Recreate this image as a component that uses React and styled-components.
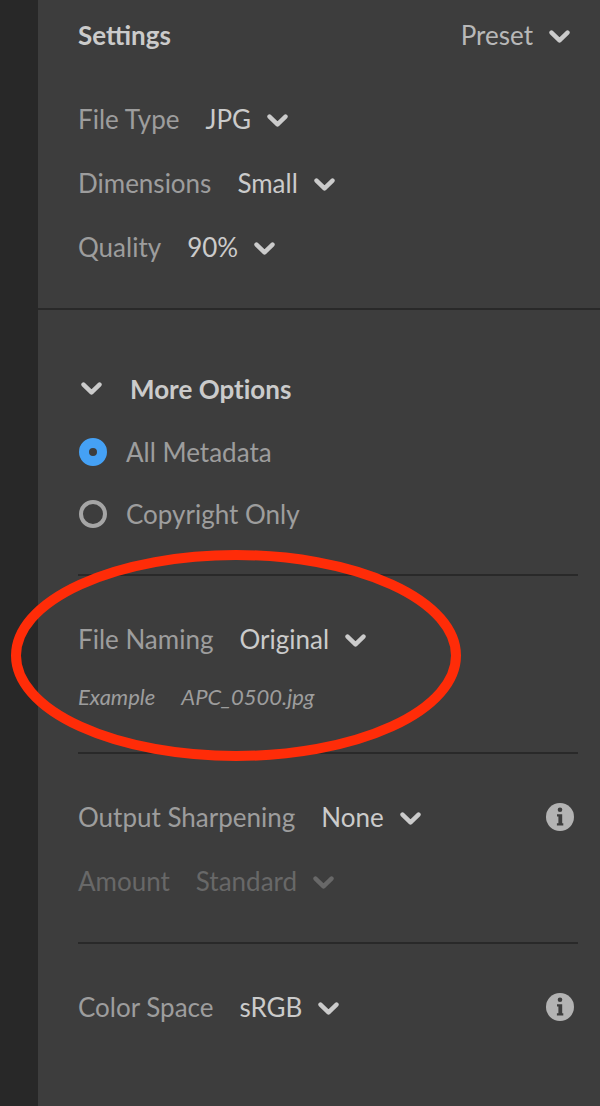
import { useState } from "react";
import styled, { createGlobalStyle } from "styled-components";

const GlobalStyle = createGlobalStyle`
  * {
    box-sizing: border-box;
  }

  body {
    margin: 0;
    background: #282828;
    font-family: Lato, "Open Sans", sans-serif;
    font-size: 26px;
    line-height: 32px;
    color: #cbcbcb;
  }
`;

const Page = styled.div`
  display: flex;
  min-height: 100vh;
  padding-left: 38px;
`;

const Panel = styled.main`
  flex: 1;
  min-width: 0;
  background: #3d3d3d;
`;

const Basics = styled.section`
  padding: 19px 22px 45px 40px;
  border-bottom: 2px solid #292929;
`;

const Header = styled.header`
  display: flex;
  align-items: center;
  justify-content: space-between;
  padding-right: 8px;
  margin-bottom: 52px;
`;

const Title = styled.h2`
  margin: 0;
  font-size: 26px;
  font-weight: 700;
`;

const Rows = styled.div`
  display: flex;
  flex-direction: column;
  gap: ${({ $gap }) => $gap || 32}px;
`;

const Options = styled.div`
  padding: 63px 22px 0 40px;
`;

const Group = styled.section`
  position: relative;
  padding: 47px 0 ${({ $bottom }) => $bottom || 45}px;
  border-top: 2px solid #292929;
`;

const Metadata = styled.fieldset`
  display: flex;
  flex-direction: column;
  gap: 30px;
  margin: 0;
  padding: 31px 0 44px;
  border: 0;
`;

const Row = styled.div`
  display: flex;
  align-items: center;
  padding-right: 4px;
  color: ${({ $disabled }) => ($disabled ? "#686868" : "#cbcbcb")};
`;

const Label = styled.label`
  margin-right: 26px;
  color: ${({ $disabled }) => ($disabled ? "#686868" : "#9d9d9d")};
`;

const SelectBox = styled.div`
  display: grid;
  align-items: center;
`;

const Select = styled.select`
  grid-area: 1 / 1;
  appearance: none;
  field-sizing: content;
  height: 32px;
  margin: 0;
  padding: 0 37px 0 0;
  border: 0;
  background: transparent;
  color: ${({ $muted }) => ($muted ? "#b8b8b8" : "inherit")};
  font: inherit;
  opacity: 1;
`;

const SelectChevron = styled.span`
  grid-area: 1 / 1;
  justify-self: end;
  display: flex;
  padding-top: 3px;
  pointer-events: none;
`;

const Toggle = styled.button`
  display: flex;
  align-items: center;
  gap: 28px;
  padding: 0 0 0 3px;
  border: 0;
  background: none;
  color: inherit;
  font: inherit;
  font-weight: 700;
  font-variant-ligatures: none;
  cursor: pointer;
`;

const RadioLabel = styled.label`
  display: flex;
  align-items: center;
  gap: 19px;
  padding-left: 1px;
  color: #9d9d9d;
`;

const Radio = styled.input`
  appearance: none;
  width: 28px;
  height: 28px;
  margin: 0;
  border: 4px solid #a5a5a5;
  border-radius: 50%;

  &:checked {
    border: 10px solid #45a1f5;
  }
`;

const Example = styled.div`
  display: flex;
  gap: 26px;
  color: #9d9d9d;
  font-size: 22px;
  font-style: italic;
`;

const InfoButton = styled.button`
  display: flex;
  margin-left: auto;
  padding: 0;
  border: 0;
  background: none;
  cursor: pointer;
`;

const Highlight = styled.svg`
  position: absolute;
  z-index: 1;
  top: -26px;
  left: -67px;
  width: 450px;
  height: 211px;
  pointer-events: none;
`;

const Chevron = () => (
  <svg width="21" height="14" viewBox="0 0 21 14" fill="none" aria-hidden="true">
    <path
      d="M2.5 2.6 10.5 10.4 18.5 2.6"
      stroke="currentColor"
      strokeWidth="4.4"
      strokeLinecap="round"
      strokeLinejoin="round"
    />
  </svg>
);

const Info = ({ label }) => (
  <InfoButton type="button" aria-label={label}>
    <svg width="28" height="28" viewBox="0 0 28 28" aria-hidden="true">
      <circle cx="14" cy="14" r="14" fill="#b3b3b3" />
      <circle cx="14" cy="6.8" r="2.3" fill="#3d3d3d" />
      <path d="M11 11.3h5.2v8.9h1.1v2.2h-6.4v-2.2h1.5v-6.7H11z" fill="#3d3d3d" />
    </svg>
  </InfoButton>
);

const Dropdown = ({ id, options, muted, ...rest }) => (
  <SelectBox>
    <Select id={id} $muted={muted} {...rest}>
      {options.map((option) => (
        <option key={option}>{option}</option>
      ))}
    </Select>
    <SelectChevron>
      <Chevron />
    </SelectChevron>
  </SelectBox>
);

const Setting = ({ id, label, options, disabled, info }) => (
  <Row $disabled={disabled}>
    <Label htmlFor={id} $disabled={disabled}>
      {label}
    </Label>
    <Dropdown id={id} options={options} disabled={disabled} />
    {info && <Info label={`About ${label}`} />}
  </Row>
);

export default function App() {
  const [open, setOpen] = useState(true);

  return (
    <Page>
      <GlobalStyle />
      <Panel>
        <Basics>
          <Header>
            <Title>Settings</Title>
            <Dropdown id="preset" aria-label="Preset" options={["Preset"]} muted />
          </Header>
          <Rows>
            <Setting id="type" label="File Type" options={["JPG", "TIFF", "DNG"]} />
            <Setting id="size" label="Dimensions" options={["Small", "Large"]} />
            <Setting id="quality" label="Quality" options={["90%", "100%"]} />
          </Rows>
        </Basics>
        <Options>
          <Toggle type="button" aria-expanded={open} onClick={() => setOpen(!open)}>
            <Chevron />
            More Options
          </Toggle>
          {open && (
            <>
              <Metadata aria-label="Metadata">
                <RadioLabel>
                  <Radio type="radio" name="metadata" defaultChecked />
                  All Metadata
                </RadioLabel>
                <RadioLabel>
                  <Radio type="radio" name="metadata" />
                  Copyright Only
                </RadioLabel>
              </Metadata>
              <Group $bottom={39}>
                <Rows $gap={26}>
                  <Setting
                    id="naming"
                    label="File Naming"
                    options={["Original", "Date", "Custom"]}
                  />
                  <Example>
                    <span>Example</span>
                    <span>APC_0500.jpg</span>
                  </Example>
                </Rows>
                <Highlight viewBox="0 0 450 211" aria-hidden="true">
                  <ellipse
                    cx="225"
                    cy="105.5"
                    rx="220"
                    ry="100.5"
                    fill="none"
                    stroke="#ff2c08"
                    strokeWidth="10"
                  />
                </Highlight>
              </Group>
              <Group>
                <Rows>
                  <Setting
                    id="sharpening"
                    label="Output Sharpening"
                    options={["None", "Screen"]}
                    info
                  />
                  <Setting
                    id="amount"
                    label="Amount"
                    options={["Standard", "High"]}
                    disabled
                  />
                </Rows>
              </Group>
              <Group>
                <Setting
                  id="color"
                  label="Color Space"
                  options={["sRGB", "Adobe RGB"]}
                  info
                />
              </Group>
            </>
          )}
        </Options>
      </Panel>
    </Page>
  );
}
